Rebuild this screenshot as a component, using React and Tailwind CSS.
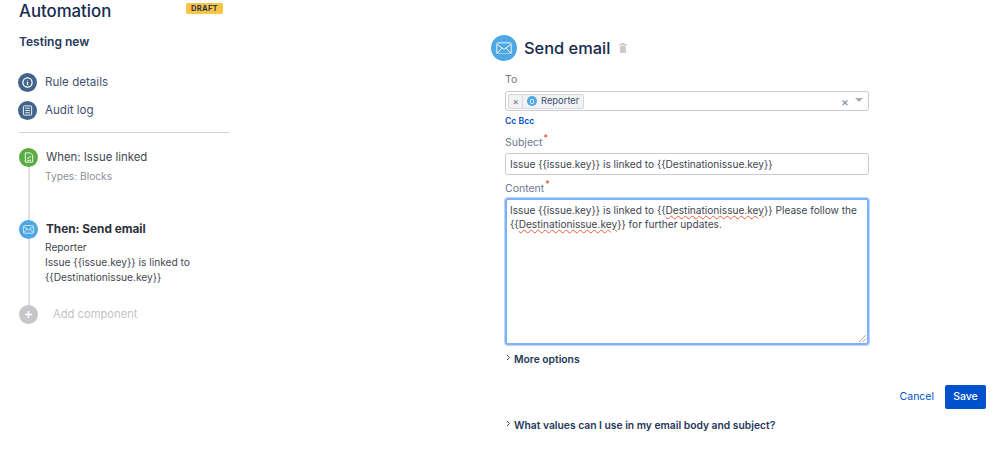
import React from "react";

function Mail({ size = 12, sw = 1.2 }) {
  return (
    <svg width={size} height={size * 0.8} viewBox="0 0 20 16" fill="none" stroke="#fff" strokeWidth={sw * 1.4}>
      <rect x="1" y="1" width="18" height="14" rx="2" />
      <path d="M1.5 3 L10 9 L18.5 3 M1.5 14 L7.5 7.5 M18.5 14 L12.5 7.5" />
    </svg>
  );
}

function Chevron() {
  return (
    <svg width="5" height="7" viewBox="0 0 5 7" fill="none" stroke="#253858" strokeWidth="0.9" className="mt-[-5px] ml-[1px]">
      <path d="M1 1 L3.5 3.5 L1 6" />
    </svg>
  );
}

function Req({ children }) {
  return (
    <div className="text-[10.5px] leading-[16px] text-[#6b778c] flex">
      {children}
      <span className="text-[#de350b] text-[9px] leading-[10px] ml-[1px] mt-[-2px]">*</span>
    </div>
  );
}

export default function App() {
  const squiggle = "underline decoration-wavy decoration-[#ef5a3c] decoration-[0.5px] underline-offset-1";
  return (
    <div className="w-[999px] h-[461px] overflow-hidden bg-white flex text-[#172b4d] font-['Inter','Liberation_Sans',sans-serif]">
      <aside className="w-[505px] shrink-0 pl-[19px] flex flex-col">
        <div className="w-[211px] flex items-start justify-between pt-[1px]">
          <h1 className="text-[16.8px] leading-[20px] text-[#172b4d] font-medium">Automation</h1>
          <span className="mt-[2px] mr-[7px] h-[11px] w-[37px] rounded-[2px] bg-[#f9c440] text-[7.5px] leading-[11px] font-bold tracking-[0.3px] text-[#253858] text-center">DRAFT</span>
        </div>
        <div className="mt-[13px] text-[12px] leading-[16px] font-semibold text-[#253858]">Testing new</div>

        <div className="mt-[23px] flex items-center gap-[8px] h-[19px] ml-[-1px]">
          <span className="w-[19px] h-[19px] rounded-full bg-[#42648c] flex items-center justify-center">
            <svg width="11" height="11" viewBox="0 0 12 12" fill="none" stroke="#fff" strokeWidth="1.4">
              <circle cx="6" cy="6" r="5" />
              <path d="M6 3.2 V3.9 M6 5.2 V9" />
            </svg>
          </span>
          <span className="text-[11.6px] text-[#42526e]">Rule details</span>
        </div>
        <div className="mt-[9px] flex items-center gap-[8px] h-[19px] ml-[-1px]">
          <span className="w-[19px] h-[19px] rounded-full bg-[#42648c] flex items-center justify-center">
            <svg width="11" height="11" viewBox="0 0 12 12" fill="none" stroke="#fff" strokeWidth="1">
              <rect x="1.5" y="1" width="9" height="10" rx="1" />
              <path d="M3.5 3.5 H8.5 M3.5 6 H8.5 M3.5 8.5 H8.5" />
            </svg>
          </span>
          <span className="text-[11.6px] text-[#42526e]">Audit log</span>
        </div>
        <div className="mt-[12px] w-[211px] h-px bg-[#d0d3d8]" />

        <div className="mt-[15px] relative">
          <div className="absolute left-[8.5px] top-[18px] w-[2px] h-[150px] bg-[#dfe1e6]" />
          <div className="flex gap-[8px] h-[72px]">
            <span className="relative w-[19px] h-[19px] rounded-full bg-[#5aac44] flex items-center justify-center shrink-0">
              <svg width="10" height="11" viewBox="0 0 10 12" fill="none" stroke="#fff" strokeWidth="1">
                <path d="M1 1 H6.5 L9 3.5 V11 H1 Z M3 7 L7 5 M3 9 H7" />
              </svg>
            </span>
            <div>
              <div className="text-[11.4px] leading-[18px] text-[#42464f]">When: Issue linked</div>
              <div className="mt-[1px] ml-[-1px] text-[10.2px] leading-[18px] text-[#8a8f98]">Types: Blocks</div>
            </div>
          </div>
          <div className="flex gap-[8px] h-[85px]">
            <span className="relative w-[19px] h-[19px] rounded-full bg-[#4fa8e4] flex items-center justify-center shrink-0">
              <Mail size={11} sw={0.9} />
            </span>
            <div>
              <div className="text-[11.8px] leading-[19px] font-bold text-[#2c3038]">Then: Send email</div>
              <div className="text-[10.2px] leading-[15px] text-[#42464f] mt-[1px] ml-[-1px]">
                Reporter<br />Issue {"{{issue.key}}"} is linked to<br />{"{{Destinationissue.key}}"}
              </div>
            </div>
          </div>
          <div className="flex gap-[15px] items-center">
            <span className="relative w-[19px] h-[19px] rounded-full bg-[#c4c6c9] flex items-center justify-center shrink-0">
              <svg width="9" height="9" viewBox="0 0 9 9" stroke="#fff" strokeWidth="1.6"><path d="M4.5 1 V8 M1 4.5 H8" /></svg>
            </span>
            <span className="text-[11.2px] text-[#c1c3c7]">Add component</span>
          </div>
        </div>
      </aside>

      <main className="flex-1 relative">
        <div className="ml-[-14px] mt-[35px] flex items-center h-[26px]">
          <span className="w-[26px] h-[26px] rounded-full bg-[#4fa8e4] flex items-center justify-center">
            <Mail size={16} sw={0.8} />
          </span>
          <h2 className="ml-[7px] text-[16.4px] leading-[26px] text-[#172b4d] font-medium">Send email</h2>
          <svg className="ml-[9px]" width="8" height="10" viewBox="0 0 8 10" fill="#c9ccd1">
            <rect x="0" y="1" width="8" height="1.4" />
            <rect x="2.5" y="0" width="3" height="1.4" />
            <rect x="1" y="3" width="6" height="7" rx="0.6" />
          </svg>
        </div>

        <div className="w-[364px]">
          <div className="mt-[12px] text-[10.5px] leading-[14px] text-[#6b778c]">To</div>
          <div className="mt-[4px] h-[20px] border border-[#c9cbcf] rounded-[3px] bg-white flex items-center pl-[2px] pr-[5px]">
            <span className="h-[15px] flex items-center bg-[#f1f2f3] border border-[#d5d7da] rounded-[2px] text-[9.4px] text-[#42526e]">
              <span className="w-[14px] text-center border-r border-[#d5d7da] text-[#5e6c84] leading-[13px]">×</span>
              <span className="ml-[4px] w-[10px] h-[10px] rounded-full bg-[#4fa8e4] flex items-center justify-center">
                <span className="w-[4px] h-[5px] border border-white/70 rounded-[1px]" />
              </span>
              <span className="ml-[4px] mr-[4px]">Reporter</span>
            </span>
            <span className="ml-auto text-[12px] leading-[12px] text-[#7a869a] mt-[1px]">×</span>
            <span className="ml-[6px] w-0 h-0 border-x-[4px] border-x-transparent border-t-[4px] border-t-[#a5adba] mt-[-2px]" />
          </div>
          <div className="mt-[4px] text-[8.6px] leading-[12px] font-semibold text-[#0052cc]">Cc Bcc</div>

          <div className="mt-[8px]"><Req>Subject</Req></div>
          <div className="mt-[2px] h-[22px] border border-[#c9cbcf] rounded-[3px] px-[4px] text-[10.15px] leading-[20px] text-[#42464f]">
            Issue {"{{issue.key}}"} is linked to {"{{Destinationissue.key}}"}
          </div>

          <div className="mt-[6px]"><Req>Content</Req></div>
          <div className="mt-[1px] relative h-[147px] border-2 border-[#7fb0fa] rounded-[3px] pl-[3px] pr-[4px] pt-[3px] text-[10.15px] leading-[14px] text-[#42464f] shadow-[0_0_0_1px_#bcd6fc]">
            Issue {"{{issue.key}}"} is linked to {"{{"}<span className={squiggle}>Destinationissue.key</span>{"}}"} Please follow the {"{{"}<span className={squiggle}>Destinationissue.key</span>{"}}"} for further updates.
            <svg className="absolute right-0 bottom-0" width="9" height="9" viewBox="0 0 9 9" stroke="#8a8f98" strokeWidth="0.8">
              <path d="M1 8 L8 1 M4.5 8 L8 4.5" />
            </svg>
          </div>

          <div className="mt-[8px] flex items-center gap-[3px] h-[14px] text-[10.3px] font-semibold text-[#253858]">
            <Chevron />More options
          </div>
        </div>

        <div className="mt-[18px] w-[481px] flex items-center justify-end gap-[11px]">
          <span className="text-[10.5px] text-[#0052cc]">Cancel</span>
          <span className="w-[41px] h-[24px] rounded-[2px] bg-[#0052cc] text-white text-[10.5px] font-medium leading-[24px] text-center">Save</span>
        </div>

        <div className="mt-[10px] flex items-center gap-[3px] h-[14px] text-[10.3px] font-semibold text-[#253858]">
          <Chevron />What values can I use in my email body and subject?
        </div>
      </main>
    </div>
  );
}
